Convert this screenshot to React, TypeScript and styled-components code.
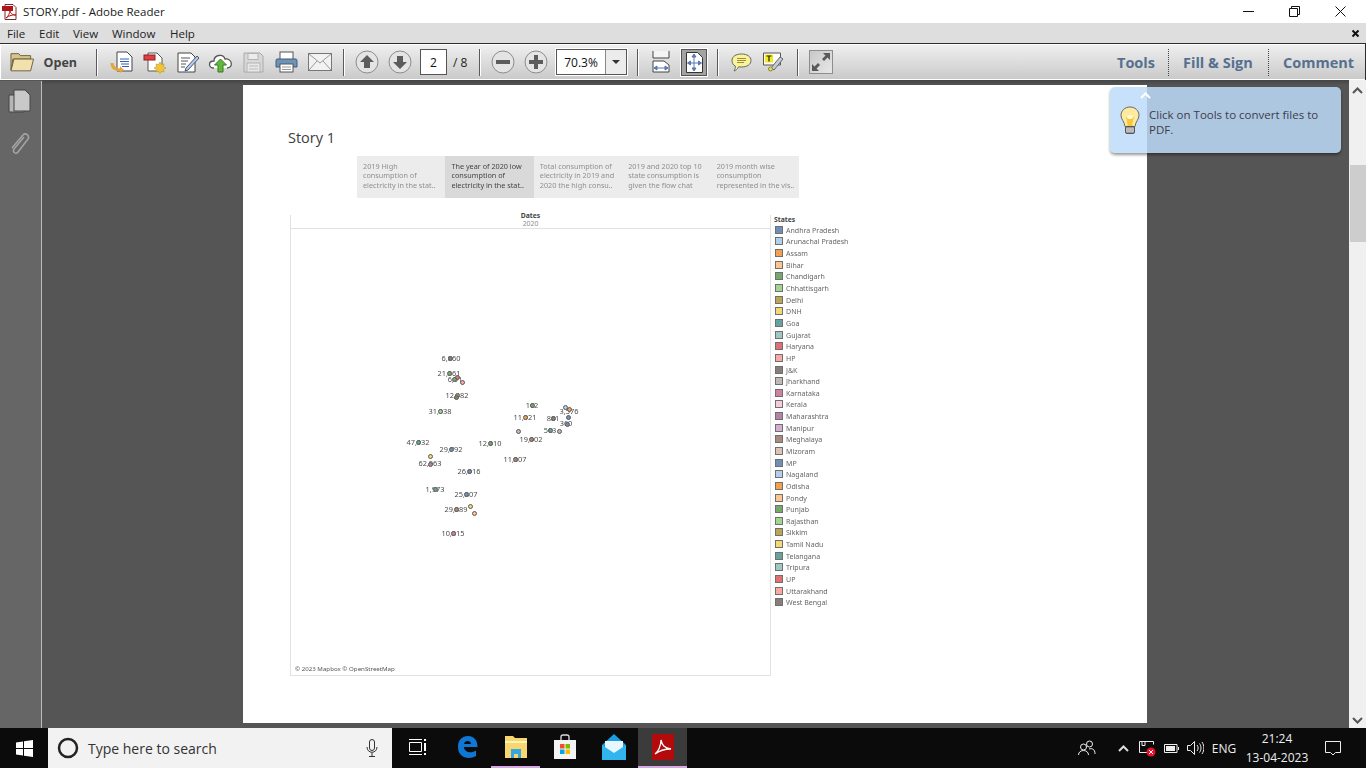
import styled, { createGlobalStyle } from 'styled-components';

const GlobalStyle = createGlobalStyle`
  html, body { margin: 0; padding: 0; background: #fff; }
  * { box-sizing: border-box; }
`;

const uiFont = `"Open Sans", "Noto Sans", "Liberation Sans", sans-serif`;
const vizFont = `"Noto Sans", "Open Sans", sans-serif`;

const Window = styled.div`
  width: 1366px;
  height: 768px;
  display: flex;
  flex-direction: column;
  overflow: hidden;
  position: relative;
  font-family: ${uiFont};
`;

const TitleBar = styled.div`
  height: 23px;
  background: #fff;
  display: flex;
  align-items: center;
  padding-left: 2px;
  font-size: 11.5px;
  color: #1a1a1a;
`;

const TitleText = styled.span`
  margin-left: 5px;
`;

const WindowControls = styled.div`
  margin-left: auto;
  display: flex;
  align-items: center;
  height: 100%;
  padding-right: 3px;
`;

const WindowButton = styled.div`
  width: 46px;
  display: flex;
  justify-content: center;
`;

const MenuBar = styled.div`
  height: 20px;
  background: #dedede;
  display: flex;
  align-items: center;
  padding-left: 7px;
  font-size: 11.5px;
  color: #222;
`;

const MenuItem = styled.span<{ $w: number }>`
  width: ${(p) => p.$w}px;
`;

const MenuClose = styled.div`
  margin-left: auto;
  margin-right: 6px;
  display: flex;
`;

const Toolbar = styled.div`
  height: 37px;
  display: flex;
  align-items: center;
  padding-left: 10px;
  background: linear-gradient(#f0f0f0, #c9c9c9);
  border: 1px solid #2c2c2c;
  border-width: 1px 1px 0 0;
  box-shadow: inset 0 1px 0 #fff, inset 0 -1px 0 #fff, inset 1px 0 0 #fff;
`;

const OpenButton = styled.div`
  width: 67px;
  display: flex;
  align-items: center;
  gap: 9px;
  font-size: 12.5px;
  font-weight: 700;
  color: #444;
`;

const Separator = styled.div<{ $l: number; $r: number }>`
  width: 1px;
  height: 27px;
  background: #5a5a5a;
  box-shadow: 1px 0 0 #fff;
  margin-left: ${(p) => p.$l}px;
  margin-right: ${(p) => p.$r}px;
`;

const IconSlot = styled.div<{ $w?: number }>`
  width: ${(p) => p.$w ?? 33}px;
  display: flex;
  justify-content: center;
  align-items: center;
`;

const PageInput = styled.div`
  width: 27px;
  height: 26px;
  margin-left: 4px;
  background: #fff;
  border: 1px solid #555;
  display: flex;
  align-items: center;
  justify-content: center;
  font-size: 12px;
  color: #111;
`;

const PageCount = styled.span`
  width: 18px;
  margin-left: 6px;
  font-size: 12px;
  color: #222;
  white-space: nowrap;
`;

const ZoomCombo = styled.div`
  width: 71px;
  height: 26px;
  margin-left: 4px;
  display: flex;
  background: #fff;
  border: 1px solid #555;
  box-shadow: 0 0 0 1px #fff;
  font-size: 12px;
  color: #111;
`;

const ZoomValue = styled.div`
  width: 48px;
  display: flex;
  align-items: center;
  justify-content: center;
`;

const ZoomArrow = styled.div`
  flex: 1;
  background: #ececec;
  border-left: 1px solid #888;
  display: flex;
  align-items: center;
  justify-content: center;
`;

const ActiveTool = styled.div`
  width: 26px;
  height: 27px;
  margin-left: 5px;
  background: #a3a3a3;
  border: 1px solid #555;
  box-shadow: 0 0 0 1px #fff;
  display: flex;
  align-items: center;
  justify-content: center;
`;

const FullScreenBox = styled.div`
  width: 24px;
  height: 24px;
  margin-left: 11px;
  border: 1px solid #8d8d8d;
  background: linear-gradient(135deg, #c8c8c8, #e8e8e8);
  display: flex;
`;

const PaneLinks = styled.div`
  margin-left: auto;
  display: flex;
  align-items: center;
  height: 27px;
  font-size: 14.5px;
  font-weight: 700;
  color: #56708f;
`;

const PaneLink = styled.div<{ $w: number; $divided?: boolean }>`
  width: ${(p) => p.$w}px;
  height: 100%;
  display: flex;
  align-items: center;
  padding-left: 14px;
  border-left: ${(p) => (p.$divided ? '1px dotted #444' : 'none')};
`;

const Body = styled.div`
  height: 648px;
  display: flex;
  background: #555;
  position: relative;
`;

const SideRail = styled.div`
  width: 42px;
  background: #666;
  border-right: 1px solid #bdbdbd;
  margin-top: 1px;
  display: flex;
  flex-direction: column;
  align-items: center;
  padding: 7px 2px 0 0;
  gap: 17px;
`;

const Viewer = styled.div`
  flex: 1;
  background: linear-gradient(#444 0, #555 5px);
  padding: 5px 0 5px 201px;
`;

const Page = styled.div`
  width: 904px;
  height: 638px;
  background: #fff;
  padding: 43px 0 0 45px;
`;

const StoryTitle = styled.div`
  height: 20px;
  line-height: 20px;
  font-size: 14.5px;
  color: #3c3c3c;
`;

const StoryTabs = styled.div`
  margin: 8px 0 0 69px;
  display: flex;
  width: 442px;
  height: 42px;
`;

const StoryTab = styled.div<{ $active?: boolean }>`
  flex: 1;
  padding: 6px 4px 0 6px;
  background: ${(p) => (p.$active ? '#d9d9d9' : '#ececec')};
  color: ${(p) => (p.$active ? '#454545' : '#8f8f8f')};
  font-family: ${vizFont};
  font-size: 7.25px;
  line-height: 9.4px;
  white-space: pre;
`;

const TabText = styled.div`
  filter: blur(0.3px);
`;

const VizRow = styled.div`
  margin: 17px 0 0 2px;
  display: flex;
  font-family: ${vizFont};
`;

const MapPanel = styled.div`
  position: relative;
  width: 481px;
  height: 461px;
  border: 1px solid #e2e2e2;
  border-width: 0 1px 1px 1px;
`;

const MapHeader = styled.div`
  height: 14px;
  border-bottom: 1px solid #e2e2e2;
  display: flex;
  flex-direction: column;
  align-items: center;
  font-size: 6.8px;
  line-height: 8px;
  color: #8c8c8c;
`;

const HeaderTitle = styled.div`
  margin-top: -3px;
  font-weight: 700;
  color: #444;
`;

const MapLabel = styled.div<{ $x: number; $y: number }>`
  position: absolute;
  left: ${(p) => p.$x}px;
  top: ${(p) => p.$y}px;
  transform: translate(-50%, -50%);
  font-size: 7.4px;
  line-height: 8px;
  color: #4a4a4a;
  white-space: nowrap;
  filter: blur(0.25px);
`;

const MapDot = styled.div<{ $x: number; $y: number; $c: string }>`
  position: absolute;
  left: ${(p) => p.$x - 2.5}px;
  top: ${(p) => p.$y - 2.5}px;
  width: 5px;
  height: 5px;
  border-radius: 50%;
  border: 1px solid #5a5a5a;
  background: ${(p) => p.$c};
`;

const MapCredit = styled.div`
  position: absolute;
  left: 4px;
  bottom: 2px;
  font-size: 6.15px;
  line-height: 8px;
  color: #555;
  filter: blur(0.25px);
`;

const Legend = styled.div`
  margin-left: 3px;
  display: flex;
  flex-direction: column;
  color: #666;
`;

const LegendTitle = styled.div`
  height: 9px;
  font-size: 6.8px;
  line-height: 9px;
  font-weight: 700;
  color: #444;
`;

const LegendRow = styled.div`
  height: 11.65px;
  display: flex;
  align-items: center;
  gap: 3px;
  font-size: 7.05px;
  white-space: nowrap;
  filter: blur(0.25px);
`;

const Swatch = styled.div<{ $c: string }>`
  width: 8px;
  height: 8px;
  margin-left: 1px;
  border: 1px solid #6f6f6f;
  background: ${(p) => p.$c};
`;

const Scrollbar = styled.div`
  width: 17px;
  background: #f0f0f0;
  display: flex;
  flex-direction: column;
  align-items: center;
  padding-top: 7px;
`;

const ScrollThumb = styled.div`
  width: 16px;
  height: 77px;
  margin-top: 71px;
  background: #cdcdcd;
`;

const ScrollDown = styled.div`
  margin-top: auto;
  margin-bottom: 4px;
  display: flex;
`;

const Hint = styled.div`
  position: absolute;
  left: 1110px;
  top: 87px;
  width: 231px;
  height: 66px;
  border-radius: 5px;
  background: rgba(190, 220, 250, 0.85);
  box-shadow: 0 2px 3px rgba(0, 0, 0, 0.4);
  display: flex;
  padding: 20px 12px 0 10px;
  gap: 9px;
  font-size: 11.5px;
  line-height: 15px;
  color: #3c3c4c;
`;

const HintCaret = styled.div`
  position: absolute;
  left: 30px;
  top: 5px;
  display: flex;
`;

const HintBulb = styled.div`
  margin-top: -1px;
  flex: none;
  display: flex;
`;

const Taskbar = styled.div`
  height: 40px;
  background: #0b0b0b;
  display: flex;
  align-items: center;
  color: #fff;
`;

const StartButton = styled.div`
  width: 48px;
  height: 100%;
  display: flex;
  align-items: center;
  justify-content: center;
`;

const SearchBox = styled.div`
  width: 344px;
  height: 100%;
  background: #f2f2f2;
  display: flex;
  align-items: center;
  padding: 0 14px 0 9px;
  color: #333;
  font-size: 14px;
  gap: 9px;
`;

const SearchMic = styled.div`
  margin-left: auto;
  display: flex;
`;

const TaskApps = styled.div`
  height: 100%;
  display: flex;
  margin-left: 1px;
`;

const TaskApp = styled.div<{ $open?: boolean; $active?: boolean }>`
  position: relative;
  width: 49px;
  height: 100%;
  display: flex;
  align-items: center;
  justify-content: center;
  background: ${(p) => (p.$active ? '#3b3b3b' : 'transparent')};
  border-bottom: 2px solid ${(p) => (p.$open ? '#d8a8e6' : 'transparent')};
`;

const Tray = styled.div`
  margin-left: auto;
  height: 100%;
  display: flex;
  align-items: center;
  padding-right: 13px;
  font-size: 12px;
  color: #eee;
`;

const TrayIcon = styled.div<{ $w: number }>`
  width: ${(p) => p.$w}px;
  display: flex;
  justify-content: center;
`;

const Clock = styled.div`
  width: 72px;
  display: flex;
  flex-direction: column;
  align-items: center;
  line-height: 19px;
`;

const tabs = [
  '2019 High\nconsumption of\nelectricity in the stat..',
  'The year of 2020 low\nconsumption of\nelectricity in the stat..',
  'Total consumption of\nelectricity in 2019 and\n2020 the high consu..',
  '2019 and 2020 top 10\nstate consumption is\ngiven the flow chat',
  '2019 month wise\nconsumption\nrepresented in the vis..',
];

const palette = [
  '#6f8fb6', '#b3d0ea', '#f5a04e', '#fcc68e', '#74a96a', '#a3d58e', '#bba64f', '#f4d873', '#64a39f', '#a0c8c2',
  '#e36f70', '#fba8a4', '#857e7b', '#c2b8b4', '#d27fa2', '#f8cadb', '#b583a8', '#d4add0', '#a98a7a', '#dcc2b8',
];

const states = [
  'Andhra Pradesh', 'Arunachal Pradesh', 'Assam', 'Bihar', 'Chandigarh', 'Chhattisgarh', 'Delhi', 'DNH', 'Goa',
  'Gujarat', 'Haryana', 'HP', 'J&K', 'Jharkhand', 'Karnataka', 'Kerala', 'Maharashtra', 'Manipur', 'Meghalaya',
  'Mizoram', 'MP', 'Nagaland', 'Odisha', 'Pondy', 'Punjab', 'Rajasthan', 'Sikkim', 'Tamil Nadu', 'Telangana',
  'Tripura', 'UP', 'Uttarakhand', 'West Bengal',
];

// screen coordinates read off the reference, the map box starts at 291,215
const MAP_X = 291;
const MAP_Y = 215;

const labels: [string, number, number][] = [
  ['6,860', 451, 358], ['21,861', 449, 373], ['6,01', 455, 379], ['12,482', 457, 395], ['31,038', 440, 411],
  ['162', 532, 405], ['3,576', 569, 411], ['11,021', 525, 417], ['881', 553, 418], ['360', 566, 423],
  ['563', 550, 430], ['19,002', 531, 439], ['47,032', 418, 442], ['12,010', 490, 443], ['29,792', 451, 449],
  ['62,063', 430, 463], ['11,807', 515, 459], ['26,016', 469, 471], ['1,973', 435, 489], ['25,807', 466, 494],
  ['29,889', 456, 509], ['10,815', 453, 533],
];

const dots: [number, number, string][] = [
  [450, 358, '#857e7b'], [449, 373, '#74a96a'], [457, 377, '#e36f70'], [454, 379, '#74a96a'], [462, 382, '#fba8a4'],
  [457, 395, '#bba64f'], [456, 397, '#857e7b'], [440, 411, '#a3d58e'], [532, 405, '#74a96a'], [565, 407, '#b3d0ea'],
  [569, 409, '#f5a04e'], [525, 417, '#f5a04e'], [553, 418, '#857e7b'], [568, 417, '#6f8fb6'], [567, 424, '#6f8fb6'],
  [518, 431, '#c2b8b4'], [550, 430, '#64a39f'], [559, 431, '#c2b8b4'], [531, 439, '#a98a7a'], [418, 442, '#64a39f'],
  [490, 443, '#74a96a'], [451, 449, '#6f8fb6'], [430, 456, '#f4d873'], [430, 464, '#b583a8'], [515, 459, '#a98a7a'],
  [469, 471, '#6f8fb6'], [435, 489, '#64a39f'], [466, 494, '#6f8fb6'], [470, 506, '#f4d873'], [474, 513, '#fcc68e'],
  [456, 509, '#a98a7a'], [453, 533, '#d27fa2'],
];

function PdfIcon({ size }: { size: number }) {
  return (
    <svg width={size} height={size} viewBox="0 0 16 16">
      <path d="M3 .5h8l3 3v12H3z" fill="#fff" stroke="#7a2a2a" />
      <rect x="0" y="2" width="11" height="5" fill="#b11414" />
      <path d="M4 14c2-1 4-5 4-8 0 3 2 5 6 5-3-.5-7 .5-10 3z" fill="none" stroke="#b11414" />
    </svg>
  );
}

function FolderIcon() {
  return (
    <svg width="25" height="22" viewBox="0 0 25 22">
      <path d="M1 5V2.500h8l1.500 2H21V8H3L1 19z" fill="#d8c48c" stroke="#6f6342" />
      <path d="M1 20l3-12h20l-3 12z" fill="#f0e1ad" stroke="#6f6342" />
    </svg>
  );
}

function CreateIcon() {
  return (
    <svg width="24" height="24" viewBox="0 0 24 24">
      <path d="M7 2h10l5 5v14H7z" fill="#fff" stroke="#444" />
      <path d="M10 9h9M10 11.500h9M11 14h8M12 16.500h7" stroke="#2f62b8" />
      <path d="M2 13c0 5 4 7 10 7" fill="none" stroke="#e0a83a" strokeWidth="3" />
      <path d="M10 16l4 4-4 3z" fill="#e0a83a" />
    </svg>
  );
}

function ConvertIcon() {
  return (
    <svg width="24" height="24" viewBox="0 0 24 24">
      <path d="M5 3h9l5 5v13H5z" fill="#fff" stroke="#555" />
      <rect x="1" y="5" width="11" height="5" fill="#df3f3f" stroke="#8e2020" />
      <path d="M17 12l1.500 2.500 2.500-.5-.5 2.500 2.500 1.500-2.500 1.500.5 2.500-2.500-.5-1.500 2-1.500-2-2.500.5.5-2.500-2.500-1.500 2.500-1.500-.5-2.500 2.500.5z" fill="#f0c33c" stroke="#b58c20" strokeWidth=".5" />
    </svg>
  );
}

function EditDocIcon() {
  return (
    <svg width="24" height="24" viewBox="0 0 24 24">
      <path d="M2 3h13l4 4v15H2z" fill="#fff" stroke="#444" />
      <path d="M5 8h9M5 11h7M5 14h5M5 17h4" stroke="#555" />
      <path d="M10 18l-1 3 3-1 11-12-2-2z" fill="#b9cbe6" stroke="#43587a" />
    </svg>
  );
}

function CloudIcon() {
  return (
    <svg width="25" height="22" viewBox="0 0 25 22">
      <path d="M6 17c-6 0-6-7 0-7 0-6 9-8 11-2 7-1 9 9 2 9" fill="#fff" stroke="#555" strokeWidth="1.300" />
      <path d="M12.500 8l6 6h-3.500v7h-5v-7H6.500z" fill="#62b83c" stroke="#3a7a22" />
    </svg>
  );
}

function SaveIcon() {
  return (
    <svg width="21" height="21" viewBox="0 0 21 21">
      <path d="M1 1h16l3 3v16H1z" fill="#d8d8d8" stroke="#a9a9a9" />
      <rect x="5" y="1.500" width="10" height="6" fill="#ececec" stroke="#b3b3b3" />
      <rect x="4" y="11" width="13" height="9" fill="#e8e8e8" stroke="#b3b3b3" />
      <path d="M6 14h9M6 17h9" stroke="#bbb" />
    </svg>
  );
}

function PrintIcon() {
  return (
    <svg width="23" height="22" viewBox="0 0 23 22">
      <rect x="5" y="1" width="13" height="8" fill="#fff" stroke="#555" />
      <path d="M2 8h19a1.500 1.500 0 0 1 1 1.500V16H1V9.500A1.500 1.500 0 0 1 2 8z" fill="#6f92b8" stroke="#3f5c7c" />
      <rect x="5" y="13" width="13" height="8" fill="#fff" stroke="#555" />
      <path d="M7 16h9M7 18.500h9" stroke="#999" />
    </svg>
  );
}

function MailIcon() {
  return (
    <svg width="24" height="18" viewBox="0 0 24 18">
      <rect x=".5" y=".5" width="23" height="17" fill="#f2f2f2" stroke="#777" />
      <path d="M1 1l11 9L23 1M1 17l8-9M23 17l-8-9" fill="none" stroke="#999" />
    </svg>
  );
}

function RoundButton({ path }: { path: string }) {
  return (
    <svg width="24" height="24" viewBox="0 0 24 24">
      <circle cx="12" cy="12" r="11" fill="#e4e4e4" stroke="#8c8c8c" />
      <path d={path} fill="#5c5c5c" />
    </svg>
  );
}

function FitWidthIcon() {
  return (
    <svg width="18" height="22" viewBox="0 0 18 22">
      <path d="M1 0v7h16V0" fill="#f4f4f4" stroke="#444" />
      <path d="M1 21V10h11l5 4v7z" fill="#fff" stroke="#444" />
      <path d="M2 17h14M2 17l3-2v4zM16 17l-3-2v4z" stroke="#5b79b0" fill="#5b79b0" />
    </svg>
  );
}

function FitPageIcon() {
  return (
    <svg width="17" height="21" viewBox="0 0 17 21">
      <path d="M.5.5h11l5 5v15H.500z" fill="#fff" stroke="#333" />
      <path d="M8 3v15M2 11h13M8 2L6 5h4zM8 19l-2-3h4zM1.500 11l3-2v4zM15.500 11l-3-2v4z" stroke="#5b79b0" fill="#5b79b0" />
    </svg>
  );
}

function CommentIcon() {
  return (
    <svg width="21" height="19" viewBox="0 0 21 19">
      <path d="M10.500 1C16 1 20 3.500 20 7.500S16 14 10.500 14c-1 0-2 0-3-.2C6.500 16 5 17.500 3 18c1-1.500 1.500-3 1.300-5C2 12 1 10 1 7.500 1 3.500 5 1 10.500 1z" fill="#fbf39a" stroke="#666" />
      <path d="M6 5.500h9M6 7.500h9M6 9.500h7" stroke="#9a8f3c" />
    </svg>
  );
}

function HighlightIcon() {
  return (
    <svg width="21" height="20" viewBox="0 0 21 20">
      <path d="M.5 1h17v12H.5z" fill="#fff" stroke="#555" />
      <rect x="2" y="2.500" width="8" height="8" fill="#f6ea1e" />
      <path d="M3.500 4h5M6 4v5.500" stroke="#222" strokeWidth="1.200" />
      <path d="M8 16L17 5l3 2-9 11z" fill="#c4ccd6" stroke="#666" />
      <circle cx="7.500" cy="17" r="2" fill="#e8e05a" stroke="#8a8430" />
    </svg>
  );
}

function FullScreenIcon() {
  return (
    <svg width="22" height="22" viewBox="0 0 22 22">
      <path d="M13 2h7v7l-2.500-2.500L14 10l-2-2 3.500-3.500zM2 20v-7l2.500 2.500L8 12l2 2-3.500 3.500L9 20z" fill="#5a5a5a" />
    </svg>
  );
}

function Chevron({ color, down }: { color: string; down?: boolean }) {
  return (
    <svg width="11" height="7" viewBox="0 0 11 7">
      <path d={down ? 'M1 1l4.500 4.500L10 1' : 'M1 6l4.500-4.500L10 6'} fill="none" stroke={color} strokeWidth="2" />
    </svg>
  );
}

function BulbIcon() {
  return (
    <svg width="20" height="30" viewBox="0 0 20 30">
      <path d="M10 1c5 0 9 3.500 9 8.500 0 4-3.500 6-4 11H5c-.5-5-4-7-4-11C1 4.500 5 1 10 1z" fill="#fbeaa0" stroke="#666" />
      <path d="M7.500 20c0-5-1-6-1.500-9h8c-.5 3-1.500 4-1.500 9z" fill="#f5c93a" />
      <ellipse cx="10" cy="11" rx="3" ry="2" fill="#fff6cf" />
      <rect x="5.500" y="20.500" width="9" height="7" rx="1.500" fill="#9a9a9a" stroke="#555" />
      <path d="M6 23h8M6 25h8" stroke="#ddd" />
    </svg>
  );
}

function WindowsLogo() {
  return (
    <svg width="17" height="17" viewBox="0 0 17 17">
      <path d="M0 2.400l7-1v6.700H0zM8 1.300L17 0v8.100H8zM0 9h7v6.600l-7-1zM8 9h9v8l-9-1.300z" fill="#fff" />
    </svg>
  );
}

function StoreIcon() {
  return (
    <svg width="24" height="26" viewBox="0 0 24 26">
      <path d="M8 6V3a2 2 0 0 1 2-2h4a2 2 0 0 1 2 2v3" fill="none" stroke="#ddd" strokeWidth="1.300" />
      <rect x="1" y="6" width="22" height="19" fill="#f4f4f4" />
      <rect x="7" y="10" width="4.500" height="4.500" fill="#f25022" />
      <rect x="12.500" y="10" width="4.500" height="4.500" fill="#7fba00" />
      <rect x="7" y="15.500" width="4.500" height="4.500" fill="#00a4ef" />
      <rect x="12.500" y="15.500" width="4.500" height="4.500" fill="#ffb900" />
    </svg>
  );
}

export default function App() {
  return (
    <Window>
      <GlobalStyle />
      <TitleBar>
        <PdfIcon size={16} />
        <TitleText>STORY.pdf - Adobe Reader</TitleText>
        <WindowControls>
          <WindowButton>
            <svg width="11" height="11" viewBox="0 0 11 11"><path d="M0 5.500h11" stroke="#111" /></svg>
          </WindowButton>
          <WindowButton>
            <svg width="11" height="11" viewBox="0 0 11 11"><path d="M.5 2.500h8v8h-8zM2.500 2.500v-2h8v8h-2" fill="none" stroke="#111" /></svg>
          </WindowButton>
          <WindowButton>
            <svg width="11" height="11" viewBox="0 0 11 11"><path d="M.5.5l10 10M10.500.5l-10 10" stroke="#111" /></svg>
          </WindowButton>
        </WindowControls>
      </TitleBar>

      <MenuBar>
        <MenuItem $w={32}>File</MenuItem>
        <MenuItem $w={34}>Edit</MenuItem>
        <MenuItem $w={39}>View</MenuItem>
        <MenuItem $w={58}>Window</MenuItem>
        <MenuItem $w={40}>Help</MenuItem>
        <MenuClose>
          <svg width="9" height="9" viewBox="0 0 9 9"><path d="M1.500 1.500l6 6M7.500 1.500l-6 6" stroke="#111" strokeWidth="2" /></svg>
        </MenuClose>
      </MenuBar>

      <Toolbar>
        <OpenButton>
          <FolderIcon />
          <span>Open</span>
        </OpenButton>
        <Separator $l={19} $r={8} />
        <IconSlot><CreateIcon /></IconSlot>
        <IconSlot><ConvertIcon /></IconSlot>
        <IconSlot><EditDocIcon /></IconSlot>
        <IconSlot><CloudIcon /></IconSlot>
        <IconSlot><SaveIcon /></IconSlot>
        <IconSlot><PrintIcon /></IconSlot>
        <IconSlot><MailIcon /></IconSlot>
        <Separator $l={7} $r={6} />
        <IconSlot><RoundButton path="M12 5l7 7h-4v6H9v-6H5z" /></IconSlot>
        <IconSlot><RoundButton path="M12 19l7-7h-4V6H9v6H5z" /></IconSlot>
        <PageInput>2</PageInput>
        <PageCount>/ 8</PageCount>
        <Separator $l={8} $r={6} />
        <IconSlot><RoundButton path="M5 10h14v4H5z" /></IconSlot>
        <IconSlot><RoundButton path="M10 5h4v5h5v4h-5v5h-4v-5H5v-4h5z" /></IconSlot>
        <ZoomCombo>
          <ZoomValue>70.3%</ZoomValue>
          <ZoomArrow>
            <svg width="8" height="4" viewBox="0 0 8 4"><path d="M0 0h8L4 4z" fill="#333" /></svg>
          </ZoomArrow>
        </ZoomCombo>
        <Separator $l={10} $r={8} />
        <IconSlot $w={30}><FitWidthIcon /></IconSlot>
        <ActiveTool><FitPageIcon /></ActiveTool>
        <Separator $l={10} $r={7} />
        <IconSlot $w={32}><CommentIcon /></IconSlot>
        <IconSlot $w={33}><HighlightIcon /></IconSlot>
        <Separator $l={7} $r={0} />
        <FullScreenBox><FullScreenIcon /></FullScreenBox>
        <PaneLinks>
          <PaneLink $w={65}>Tools</PaneLink>
          <PaneLink $w={100} $divided>Fill &amp; Sign</PaneLink>
          <PaneLink $w={97} $divided>Comment</PaneLink>
        </PaneLinks>
      </Toolbar>

      <Body>
        <SideRail>
          <svg width="24" height="26" viewBox="0 0 24 26">
            <path d="M1 7h15v17H1z" fill="#b5b5b5" stroke="#444" />
            <path d="M6 2h11l5 5v16H6z" fill="#c9c9c9" stroke="#444" />
          </svg>
          <svg width="22" height="26" viewBox="0 0 22 26">
            <path d="M15 6l-10 12c-2 3 2 6 4 3L19 8c2-3-2-7-5-4L3 17" fill="none" stroke="#a5a5a5" strokeWidth="1.500" />
          </svg>
        </SideRail>
        <Viewer>
          <Page>
            <StoryTitle>Story 1</StoryTitle>
            <StoryTabs>
              {tabs.map((t, i) => (
                <StoryTab key={t} $active={i === 1}>
                  <TabText>{t}</TabText>
                </StoryTab>
              ))}
            </StoryTabs>
            <VizRow>
              <MapPanel>
                <MapHeader>
                  <HeaderTitle>Dates</HeaderTitle>
                  <div>2020</div>
                </MapHeader>
                {labels.map(([text, x, y]) => (
                  <MapLabel key={text} $x={x - MAP_X} $y={y - MAP_Y}>{text}</MapLabel>
                ))}
                {dots.map(([x, y, c]) => (
                  <MapDot key={`${x}-${y}`} $x={x - MAP_X} $y={y - MAP_Y} $c={c} />
                ))}
                <MapCredit>© 2023 Mapbox © OpenStreetMap</MapCredit>
              </MapPanel>
              <Legend>
                <LegendTitle>States</LegendTitle>
                {states.map((s, i) => (
                  <LegendRow key={s}>
                    <Swatch $c={palette[i % palette.length]} />
                    {s}
                  </LegendRow>
                ))}
              </Legend>
            </VizRow>
          </Page>
        </Viewer>
        <Scrollbar>
          <Chevron color="#555" />
          <ScrollThumb />
          <ScrollDown><Chevron color="#555" down /></ScrollDown>
        </Scrollbar>
      </Body>

      <Taskbar>
        <StartButton><WindowsLogo /></StartButton>
        <SearchBox>
          <svg width="22" height="22" viewBox="0 0 22 22"><circle cx="11" cy="11" r="9" fill="none" stroke="#222" strokeWidth="2.500" /></svg>
          Type here to search
          <SearchMic>
            <svg width="12" height="18" viewBox="0 0 12 18">
              <rect x="3.500" y=".5" width="5" height="11" rx="2.500" fill="none" stroke="#333" />
              <path d="M1 8c0 7 10 7 10 0M6 13.500V17M3 17.500h6" fill="none" stroke="#333" />
            </svg>
          </SearchMic>
        </SearchBox>
        <TaskApps>
          <TaskApp>
            <svg width="18" height="18" viewBox="0 0 18 18">
              <path d="M.5 4.500h12v9H.5zM0 1.500h13M0 16.500h13" fill="none" stroke="#fff" />
              <path d="M15 1h2v2h-2zM15 5h2v8h-2zM15 15h2v2h-2z" fill="#fff" />
            </svg>
          </TaskApp>
          <TaskApp>
            <svg width="22" height="24" viewBox="0 0 22 24">
              <path d="M2 12C2 5 6 1 12 1c6 0 9.500 4 9.500 11H8c0 5 7 7 12 3.500V21c-7 4-18 2-18-9z" fill="#0f78d4" />
              <path d="M8 9h7c0-4-6.500-4-7 0z" fill="#0b0b0b" />
            </svg>
          </TaskApp>
          <TaskApp $open>
            <svg width="22" height="24" viewBox="0 0 22 24">
              <path d="M0 1h8l2 2h12v20H0z" fill="#f6d66f" />
              <path d="M0 6h22v2H0z" fill="#fff2b8" />
              <path d="M6 14h10v9H6z" fill="#35a6e0" />
              <path d="M9 19h4v4H9z" fill="#f6d66f" />
            </svg>
          </TaskApp>
          <TaskApp><StoreIcon /></TaskApp>
          <TaskApp>
            <svg width="24" height="26" viewBox="0 0 24 26">
              <path d="M0 11L12 0l12 11v15H0z" fill="#1b9de2" />
              <path d="M3 7h18v7l-9 6-9-6z" fill="#e8f6fd" />
              <path d="M0 11l12 8 12-8v15H0z" fill="#32b4ee" />
            </svg>
          </TaskApp>
          <TaskApp $active $open>
            <svg width="22" height="26" viewBox="0 0 22 26">
              <rect width="22" height="26" rx="1" fill="#b30b0b" />
              <path d="M3 20c3-2 6-8 6-14 1 5 3 8 10 9-5 0-11 1-16 5z" fill="none" stroke="#fff" strokeWidth="1.300" />
            </svg>
          </TaskApp>
        </TaskApps>
        <Tray>
          <TrayIcon $w={48}>
            <svg width="18" height="16" viewBox="0 0 18 16">
              <circle cx="11.500" cy="4" r="3" fill="none" stroke="#eee" />
              <circle cx="5.500" cy="7" r="3" fill="none" stroke="#eee" />
              <path d="M.5 15c0-6 10-6 10 0M11 9c3-1 6 0 6 5" fill="none" stroke="#eee" />
            </svg>
          </TrayIcon>
          <TrayIcon $w={24}><Chevron color="#ddd" /></TrayIcon>
          <TrayIcon $w={24}>
            <svg width="17" height="17" viewBox="0 0 17 17">
              <path d="M.5 1.500h14v3M.5 1.500v11h8M3 1.500h3v4H3z" fill="none" stroke="#eee" />
              <circle cx="12" cy="12" r="4.500" fill="#e81123" />
              <path d="M10 10l4 4M14 10l-4 4" stroke="#fff" />
            </svg>
          </TrayIcon>
          <TrayIcon $w={24}>
            <svg width="15" height="9" viewBox="0 0 15 9">
              <path d="M.5.5h12.500v8H.5z" fill="none" stroke="#eee" />
              <path d="M2 2h9v5H2z" fill="#eee" />
              <path d="M14 3h1v3h-1z" fill="#eee" />
            </svg>
          </TrayIcon>
          <TrayIcon $w={24}>
            <svg width="17" height="14" viewBox="0 0 17 14">
              <path d="M.5 4.500h3l4-4v13l-4-4h-3zM10 4c1.500 2 1.500 4 0 6M12.500 2.500c2 3 2 6 0 9M15 1c2.500 4 2.500 8 0 12" fill="none" stroke="#eee" />
            </svg>
          </TrayIcon>
          <TrayIcon $w={34}>ENG</TrayIcon>
          <Clock>
            <div>21:24</div>
            <div>13-04-2023</div>
          </Clock>
          <TrayIcon $w={40}>
            <svg width="16" height="15" viewBox="0 0 16 15">
              <path d="M.5.5h15v11h-5l-2.500 2.500-2.500-2.500h-5z" fill="none" stroke="#eee" />
            </svg>
          </TrayIcon>
        </Tray>
      </Taskbar>

      <Hint>
        <HintCaret><Chevron color="#fff" /></HintCaret>
        <HintBulb><BulbIcon /></HintBulb>
        <div>Click on Tools to convert files to PDF.</div>
      </Hint>
    </Window>
  );
}
